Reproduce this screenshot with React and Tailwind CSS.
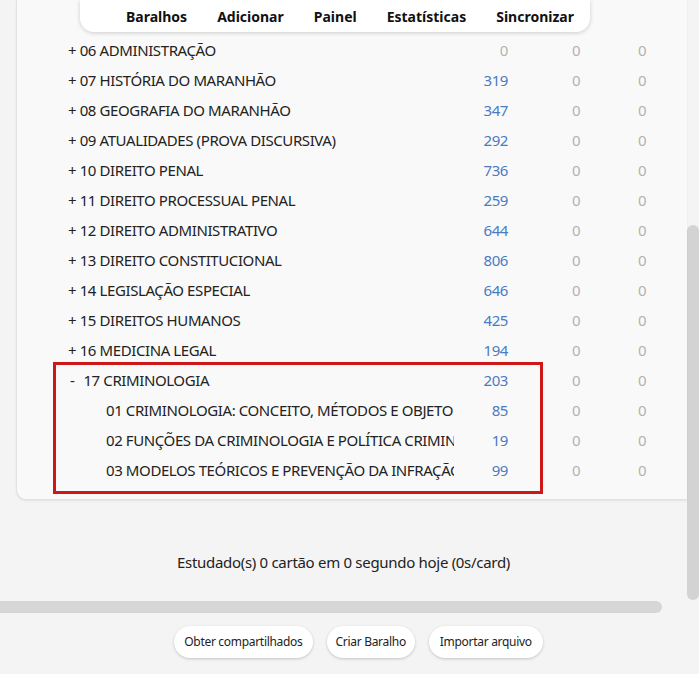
import React from "react";

const decks = [
  { name: "06 ADMINISTRAÇÃO", n: 0 },
  { name: "07 HISTÓRIA DO MARANHÃO", n: 319 },
  { name: "08 GEOGRAFIA DO MARANHÃO", n: 347 },
  { name: "09 ATUALIDADES (PROVA DISCURSIVA)", n: 292 },
  { name: "10 DIREITO PENAL", n: 736 },
  { name: "11 DIREITO PROCESSUAL PENAL", n: 259 },
  { name: "12 DIREITO ADMINISTRATIVO", n: 644 },
  { name: "13 DIREITO CONSTITUCIONAL", n: 806 },
  { name: "14 LEGISLAÇÃO ESPECIAL", n: 646 },
  { name: "15 DIREITOS HUMANOS", n: 425 },
  { name: "16 MEDICINA LEGAL", n: 194 },
];

const children = [
  { name: "01 CRIMINOLOGIA: CONCEITO, MÉTODOS E OBJETO", n: 85 },
  { name: "02 FUNÇÕES DA CRIMINOLOGIA E POLÍTICA CRIMINAL", n: 19 },
  { name: "03 MODELOS TEÓRICOS E PREVENÇÃO DA INFRAÇÃO PENAL", n: 99 },
];

function Counts({ n }) {
  return (
    <>
      <div className={`w-[56px] text-right pr-[2px] ${n === 0 ? "text-[#b3b3b3]" : "text-[#4b7bc2]"}`}>{n}</div>
      <div className="w-[33px]" />
      <div className="w-[66px] text-center text-[#b3b3b3]">0</div>
      <div className="w-[66px] text-center text-[#b3b3b3]">0</div>
    </>
  );
}

function Row({ label, n, indent }) {
  return (
    <div className="h-[30px] flex items-center">
      <div className={`w-[386px] whitespace-nowrap overflow-hidden ${indent ? "pl-[38px]" : ""}`}>{label}</div>
      <Counts n={n} />
    </div>
  );
}

export default function App() {
  return (
    <div
      className="relative w-[699px] h-[674px] overflow-hidden bg-[#f4f4f4] flex text-[15px] text-[#222]"
      style={{ fontFamily: '"Noto Sans", "Open Sans", sans-serif' }}
    >
      <div className="w-[687px] flex flex-col">
        {/* deck list card */}
        <div className="relative ml-[16px] w-[671px] h-[500px] bg-[#f9f9f9] border-b border-l border-[#e2e2e2] rounded-bl-[10px] shadow-[0_1px_2px_rgba(0,0,0,0.08)] pt-[35px] pl-[51px] tracking-[-0.4px]">
          {decks.map((d) => (
            <Row key={d.name} label={`+ ${d.name}`} n={d.n} />
          ))}
          <Row label={<span><span className="pl-[2px]">-</span><span className="pl-[9px]">17 CRIMINOLOGIA</span></span>} n={203} />
          {children.map((d) => (
            <Row key={d.name} label={d.name} n={d.n} indent />
          ))}
          <div className="absolute left-[36px] top-[362px] w-[490px] h-[132px] border-[3px] border-[#d01717]" />
        </div>

        <div className="mt-[52px] h-[20px] leading-[20px] text-center tracking-[-0.3px]">
          Estudado(s) 0 cartão em 0 segundo hoje (0s/card)
        </div>

        <div className="mt-[29px] w-[662px] h-[12px] rounded-r-full rounded-l-[4px] bg-[#d6d6d6]" />

        <div className="mt-[13px] flex justify-center gap-[14px] text-[12px] tracking-[-0.3px] pl-[30px]">
          <button className="h-[32px] px-[10px] rounded-full bg-white shadow-[0_1px_3px_rgba(0,0,0,0.2)]">Obter compartilhados</button>
          <button className="h-[32px] px-[9px] rounded-full bg-white shadow-[0_1px_3px_rgba(0,0,0,0.2)]">Criar Baralho</button>
          <button className="h-[32px] px-[11px] rounded-full bg-white shadow-[0_1px_3px_rgba(0,0,0,0.2)]">Importar arquivo</button>
        </div>
      </div>

      {/* vertical scrollbar */}
      <div className="w-[12px]">
        <div className="mt-[225px] h-[375px] rounded-full bg-[#d3d3d3]" />
      </div>

      {/* top toolbar */}
      <div className="absolute left-[80px] top-0 w-[510px] h-[32px] bg-white rounded-b-[14px] shadow-[0_1px_4px_rgba(0,0,0,0.18)] flex items-center pl-[46px] gap-[30px] font-bold text-[14px] text-[#111]">
        <span>Baralhos</span>
        <span>Adicionar</span>
        <span>Painel</span>
        <span>Estatísticas</span>
        <span>Sincronizar</span>
      </div>
    </div>
  );
}
